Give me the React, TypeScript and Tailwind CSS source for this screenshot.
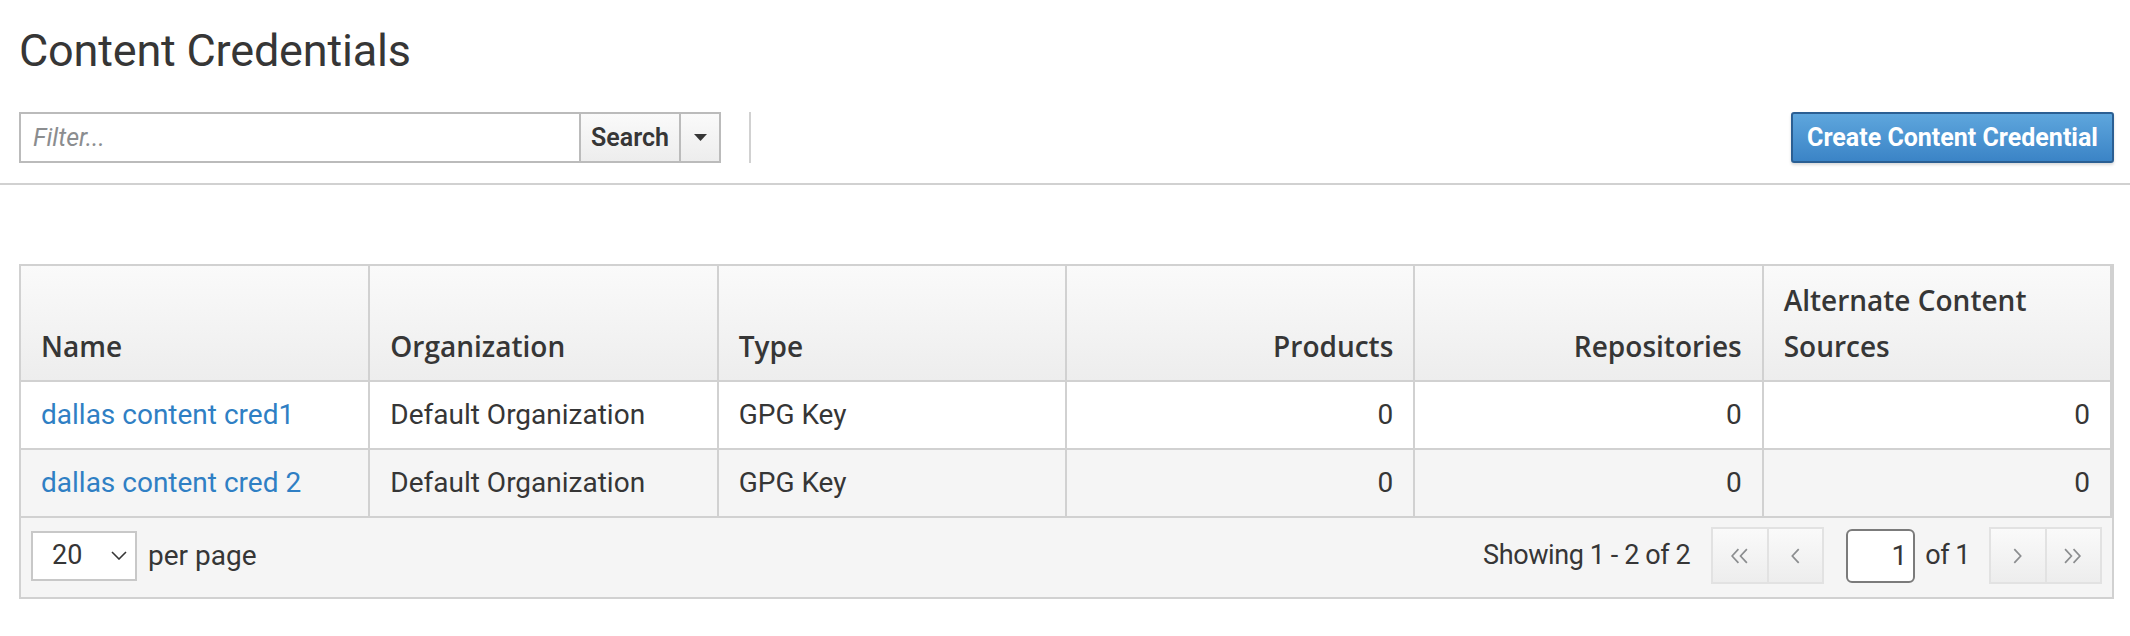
import React from "react";

const rows = [
  { name: "dallas content cred1", org: "Default Organization", type: "GPG Key", products: 0, repos: 0, acs: 0 },
  { name: "dallas content cred 2", org: "Default Organization", type: "GPG Key", products: 0, repos: 0, acs: 0 },
];

const Chevron = ({ dir, double }: { dir: "left" | "right"; double?: boolean }) => {
  const pts = dir === "left" ? "7,1 1,7.5 7,14" : "1,1 7,7.5 1,14";
  return (
    <svg width={double ? 18 : 9} height="16" viewBox={double ? "0 0 17 15" : "0 0 8 15"} fill="none">
      <polyline points={pts} stroke="#8b8d8f" strokeWidth="1.6" />
      {double && (
        <polyline
          points={dir === "left" ? "15,1 9,7.5 15,14" : "9,1 15,7.5 9,14"}
          stroke="#8b8d8f"
          strokeWidth="1.6"
        />
      )}
    </svg>
  );
};

const PagerGroup = ({ dir }: { dir: "left" | "right" }) => {
  const first = dir === "left" ? <Chevron dir="left" double /> : <Chevron dir="right" />;
  const second = dir === "left" ? <Chevron dir="left" /> : <Chevron dir="right" double />;
  return (
    <div className="flex h-[57px] w-[113px] border-2 border-[#e2e2e2] bg-gradient-to-b from-[#fafafa] to-[#ededed]">
      <div className="flex flex-1 items-center justify-center border-r-2 border-[#e2e2e2]">{first}</div>
      <div className="flex flex-1 items-center justify-center">{second}</div>
    </div>
  );
};

export default function App() {
  const th = "border-b-2 border-r-2 border-[#d1d1d1] px-[20px] pt-[11px] pb-[11px] align-bottom text-[28px] leading-[46px] font-semibold";
  const td = "border-b-2 border-r-2 border-[#d1d1d1] px-[20px] py-[10px] text-[28px] leading-[46px]";

  return (
    <div className="min-h-[636px] w-full bg-white text-[#363636] font-['Roboto',sans-serif]">
      <h1 className="mt-[24px] pl-[19px] text-[45px] leading-[54px] font-normal tracking-[-0.2px] text-[#363636]">
        Content Credentials
      </h1>

      <div className="mt-[34px] flex items-center pl-[19px] pr-[16px] pb-[20px] border-b-2 border-[#d1d1d1]">
        <div className="flex h-[51px] w-[702px]">
          <div className="flex flex-1 items-center border-2 border-r-0 border-[#bbbbbb] pl-[12px]">
            <span className="text-[25px] italic text-[#8b8d8f]">Filter...</span>
          </div>
          <div className="flex w-[102px] items-center justify-center border-2 border-[#bbbbbb] bg-gradient-to-b from-[#fafafa] to-[#ededed] text-[25px] font-semibold text-[#363636]">
            Search
          </div>
          <div className="flex w-[40px] items-center justify-center border-2 border-l-0 border-[#bbbbbb] bg-gradient-to-b from-[#fafafa] to-[#ededed]">
            <svg width="13" height="7" viewBox="0 0 13 7">
              <polygon points="0,0 13,0 6.5,7" fill="#363636" />
            </svg>
          </div>
        </div>
        <div className="ml-[28px] h-[51px] w-[2px] bg-[#d1d1d1]" />
        <div className="ml-auto flex h-[51px] w-[323px] items-center justify-center rounded-[3px] border-2 border-[#2b5f93] bg-gradient-to-b from-[#5ea6dd] to-[#3b84c6] text-[25px] font-bold text-white shadow-[0_2px_3px_rgba(0,0,0,0.15)]">
          Create Content Credential
        </div>
      </div>

      <div className="mt-[79px] ml-[19px] w-[2095px] border-2 border-[#d1d1d1]">
        <table className="w-full table-fixed border-collapse">
          <thead>
            <tr className="bg-gradient-to-b from-[#fafafa] to-[#ededed] font-['Open_Sans',sans-serif]">
              <th className={`${th} text-left`}>Name</th>
              <th className={`${th} text-left`}>Organization</th>
              <th className={`${th} text-left`}>Type</th>
              <th className={`${th} text-right`}>Products</th>
              <th className={`${th} text-right`}>Repositories</th>
              <th className={`${th} text-left border-r-0`}>Alternate Content Sources</th>
            </tr>
          </thead>
          <tbody>
            {rows.map((r, i) => (
              <tr key={r.name} className={i % 2 === 1 ? "bg-[#f5f5f5]" : "bg-white"}>
                <td className={`${td} text-[#2f7fc4]`}>{r.name}</td>
                <td className={td}>{r.org}</td>
                <td className={td}>{r.type}</td>
                <td className={`${td} text-right`}>{r.products}</td>
                <td className={`${td} text-right`}>{r.repos}</td>
                <td className={`${td} text-right border-r-0`}>{r.acs}</td>
              </tr>
            ))}
          </tbody>
        </table>

        <div className="flex h-[79px] items-center bg-[#f5f5f5] pl-[10px] pr-[10px] pb-[4px]">
          <div className="flex h-[50px] w-[106px] items-center border-2 border-[#c8c8c8] bg-white pl-[19px] pr-[8px]">
            <span className="text-[27px]">20</span>
            <svg className="ml-auto" width="16" height="9" viewBox="0 0 16 9" fill="none">
              <polyline points="1,1 8,8 15,1" stroke="#363636" strokeWidth="1.6" />
            </svg>
          </div>
          <span className="ml-[11px] text-[28px]">per page</span>

          <span className="ml-auto text-[27px] tracking-[-0.4px]">Showing 1 - 2 of 2</span>
          <div className="ml-[21px]">
            <PagerGroup dir="left" />
          </div>
          <div className="ml-[22px] flex h-[54px] w-[69px] items-center justify-end rounded-[6px] border-2 border-[#7b7b7b] bg-white pr-[6px] text-[28px]">
            1
          </div>
          <span className="ml-[10px] text-[27px] tracking-[-0.5px]">of 1</span>
          <div className="ml-[19px]">
            <PagerGroup dir="right" />
          </div>
        </div>
      </div>
    </div>
  );
}
